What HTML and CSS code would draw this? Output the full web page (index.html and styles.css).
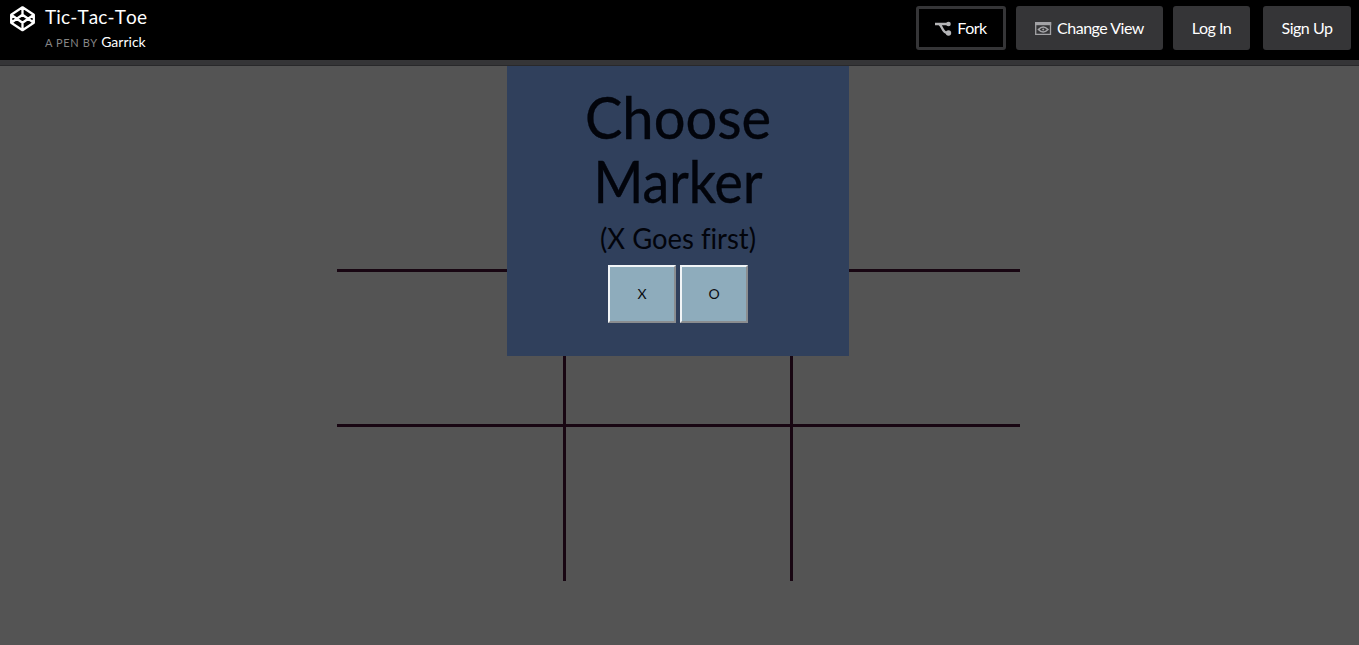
FILE: index.html
```html
<!DOCTYPE html>
<html lang="en">
<head>
<meta charset="utf-8">
<title>Tic-Tac-Toe</title>
<link rel="stylesheet" href="styles.css">
</head>
<body>
<header class="topbar">
  <svg class="logo" viewBox="0 0 26 26" fill="none" stroke="#fff" stroke-width="2.3" stroke-linejoin="round"><path d="M12.500 1.300 23.800 8.700v8L12.500 24.200 1.200 16.700v-8zM12.500 1.300v7.400M12.500 16.700v7.500M1.200 8.700l11.300 8 11.300-8M1.200 16.700l11.300-8 11.300 8"/></svg>
  <div class="pen">
    <h1 class="pen-title">Tic-Tac-Toe</h1>
    <div class="byline"><span class="by">A PEN BY</span> <span class="author">Garrick</span></div>
  </div>
  <nav class="actions">
    <a class="button fork"><svg class="icon" viewBox="0 0 17 15" fill="none" stroke="#b4b4b6" stroke-width="2.400"><path d="M0 3h3.500C7 3 7 12 12.500 12M3 3H13"/><circle cx="13.500" cy="3" r="2.300" fill="#b4b4b6" stroke="none"/><circle cx="13.500" cy="12" r="2.700" fill="#b4b4b6" stroke="none"/></svg><span class="label">Fork</span></a>
    <a class="button view"><svg class="icon" viewBox="0 0 17 15" fill="none" stroke="#a3a3a6"><path d="M.7 1.700h14.800v11.600H.7z" stroke-width="1.300"/><path d="M0 2.700h16.200" stroke-width="3"/><path d="M3.500 8.500q4.700-5 9.400 0-4.700 5-9.400 0z" stroke-width="1.700"/><circle cx="8.200" cy="8.500" r="1" fill="#a3a3a6" stroke="none"/></svg><span class="label">Change View</span></a>
    <a class="button login"><span class="label">Log In</span></a>
    <a class="button signup"><span class="label">Sign Up</span></a>
  </nav>
</header>
<main class="stage">
  <div class="board">
    <div class="cell"></div><div class="cell"></div><div class="cell"></div>
    <div class="cell"></div><div class="cell"></div><div class="cell"></div>
    <div class="cell"></div><div class="cell"></div><div class="cell"></div>
  </div>
  <section class="modal">
    <h2 class="heading"><span class="choose">Choose</span><span class="marker">Marker</span></h2>
    <p class="note">(X Goes first)</p>
    <div class="markers"><button class="mark">X</button><button class="mark">O</button></div>
  </section>
</main>
</body>
</html>
```
FILE: styles.css
```css
* { box-sizing: border-box; }
body { margin: 0; height: 645px; overflow: hidden; background: #545454; font-family: Lato, "Liberation Sans", sans-serif; }
.topbar { display: flex; height: 65px; padding: 6px 8px 0 10px; background: #000; border-bottom: 5px solid #353537; }
.logo { width: 26px; height: 26px; flex: none; }
.pen { margin-left: 9px; white-space: nowrap; }
.pen-title { margin: 0; color: #fff; font-size: 19px; font-weight: 400; line-height: 22px; font-kerning: none; letter-spacing: .12px; }
.byline { margin-top: 5px; line-height: 18px; font-size: 14px; color: #fff; }
.by { color: #858585; font-size: 11px; letter-spacing: .6px; }
.actions { display: flex; margin-left: auto; }
.button { display: flex; align-items: center; justify-content: center; height: 44px; padding-bottom: 1px; border-radius: 3px; background: #353537; color: #fff; font-size: 16px; white-space: nowrap; }
.label { letter-spacing: -.5px; }
.icon { width: 17px; height: 15px; margin: 1px 5px 0 0; }
.fork { width: 90px; background: #000; border: 3px solid #353537; margin-right: 10px; }
.view { width: 147px; margin-right: 10px; }
.login { width: 77px; margin-right: 13px; }
.signup { width: 88px; }
.stage { position: relative; height: 580px; padding: 48px 339px 0 337px; border-top: 1px solid #29292b; }
.board { display: grid; grid-template-columns: 229px 227px 227px; grid-template-rows: 158px 155px 154px; }
.cell { border-right: 3px solid #180612; border-bottom: 3px solid #180612; }
.cell:nth-child(3n) { border-right: 0; }
.cell:nth-child(n+7) { border-bottom: 0; }
.modal { position: absolute; left: 507px; top: 0; width: 342px; height: 290px; padding-top: 18px; background: #30405c; color: #02040b; text-align: center; }
.heading { margin: 0; font-size: 59px; font-weight: 400; line-height: 64px; -webkit-text-stroke: .4px #02040b; }
.heading span { display: block; }
.choose { transform: translateY(1px) scaleX(.95); }
.marker { transform: translateY(1px) scaleX(.91); }
.note { margin: 8px 0 0; font-size: 29px; line-height: 36px; font-variant-ligatures: none; transform: scaleX(.945); }
.markers { display: flex; justify-content: center; gap: 4px; margin-top: 9px; }
.mark { width: 68px; height: 58px; padding: 0 0 2px; border: 2px solid; border-color: #f1f5f7 #8a8d90 #8a8d90 #f1f5f7; background: #8eacbc; color: #090b10; font: 14px Lato, sans-serif; }
```
